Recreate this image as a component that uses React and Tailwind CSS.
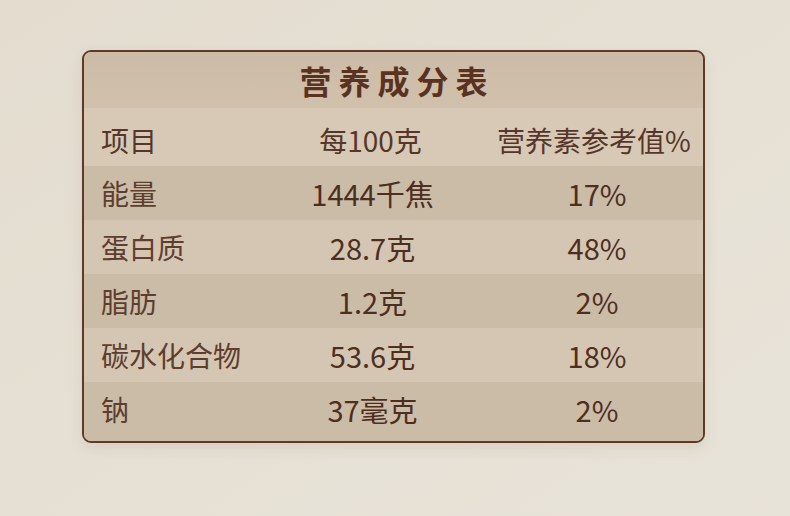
const rows = [
  ['能量', '1444千焦', '17%'],
  ['蛋白质', '28.7克', '48%'],
  ['脂肪', '1.2克', '2%'],
  ['碳水化合物', '53.6克', '18%'],
  ['钠', '37毫克', '2%'],
]

const font = { fontFamily: '"Noto Sans CJK SC", "Noto Sans", sans-serif' }

export default function App() {
  return (
    <div
      className="w-[790px] h-[516px] bg-gradient-to-br from-[#e3dccf] via-[#e6e0d4] to-[#e8e3d9] pt-[50px] pl-[82px]"
      style={font}
    >
      <div className="w-[623px] rounded-[9px] border-2 border-[#5e3a26] bg-[#d3c4b0] overflow-hidden shadow-[0_6px_14px_rgba(120,95,70,0.12)]">
        {/* title */}
        <div className="h-[56px] flex items-center justify-center bg-gradient-to-b from-[#cbbba7] to-[#d0c0ac]">
          <h1 className="text-[32px] font-bold tracking-[7px] pl-[7px] text-[#5a3222] leading-none">
            营养成分表
          </h1>
        </div>

        {/* header */}
        <div className="h-[58px] pt-[6px] grid grid-cols-[176px_225px_1fr] items-center bg-[#d7c9b6] text-[#56362a] text-[28px] leading-none">
          <span className="pl-[17px]">项目</span>
          <span className="text-center pr-[4px]">每100克</span>
          <span className="text-center">营养素参考值%</span>
        </div>

        {rows.map(([name, amount, pct], i) => (
          <div
            key={name}
            className={
              'grid grid-cols-[176px_225px_1fr] items-center leading-none ' +
              (i === rows.length - 1 ? 'h-[59px] pb-[5px] ' : 'h-[54px] ') +
              (i % 2 === 0 ? 'bg-[#cbbca8]' : 'bg-[#d5c6b3]')
            }
          >
            <span className="pl-[17px] text-[28px] text-[#5d3e2f]">{name}</span>
            <span className="text-center text-[29px] text-[#4e2e1f]">{amount}</span>
            <span className="text-center pl-[6px] text-[29px] text-[#4e2e1f]">{pct}</span>
          </div>
        ))}
      </div>
    </div>
  )
}
